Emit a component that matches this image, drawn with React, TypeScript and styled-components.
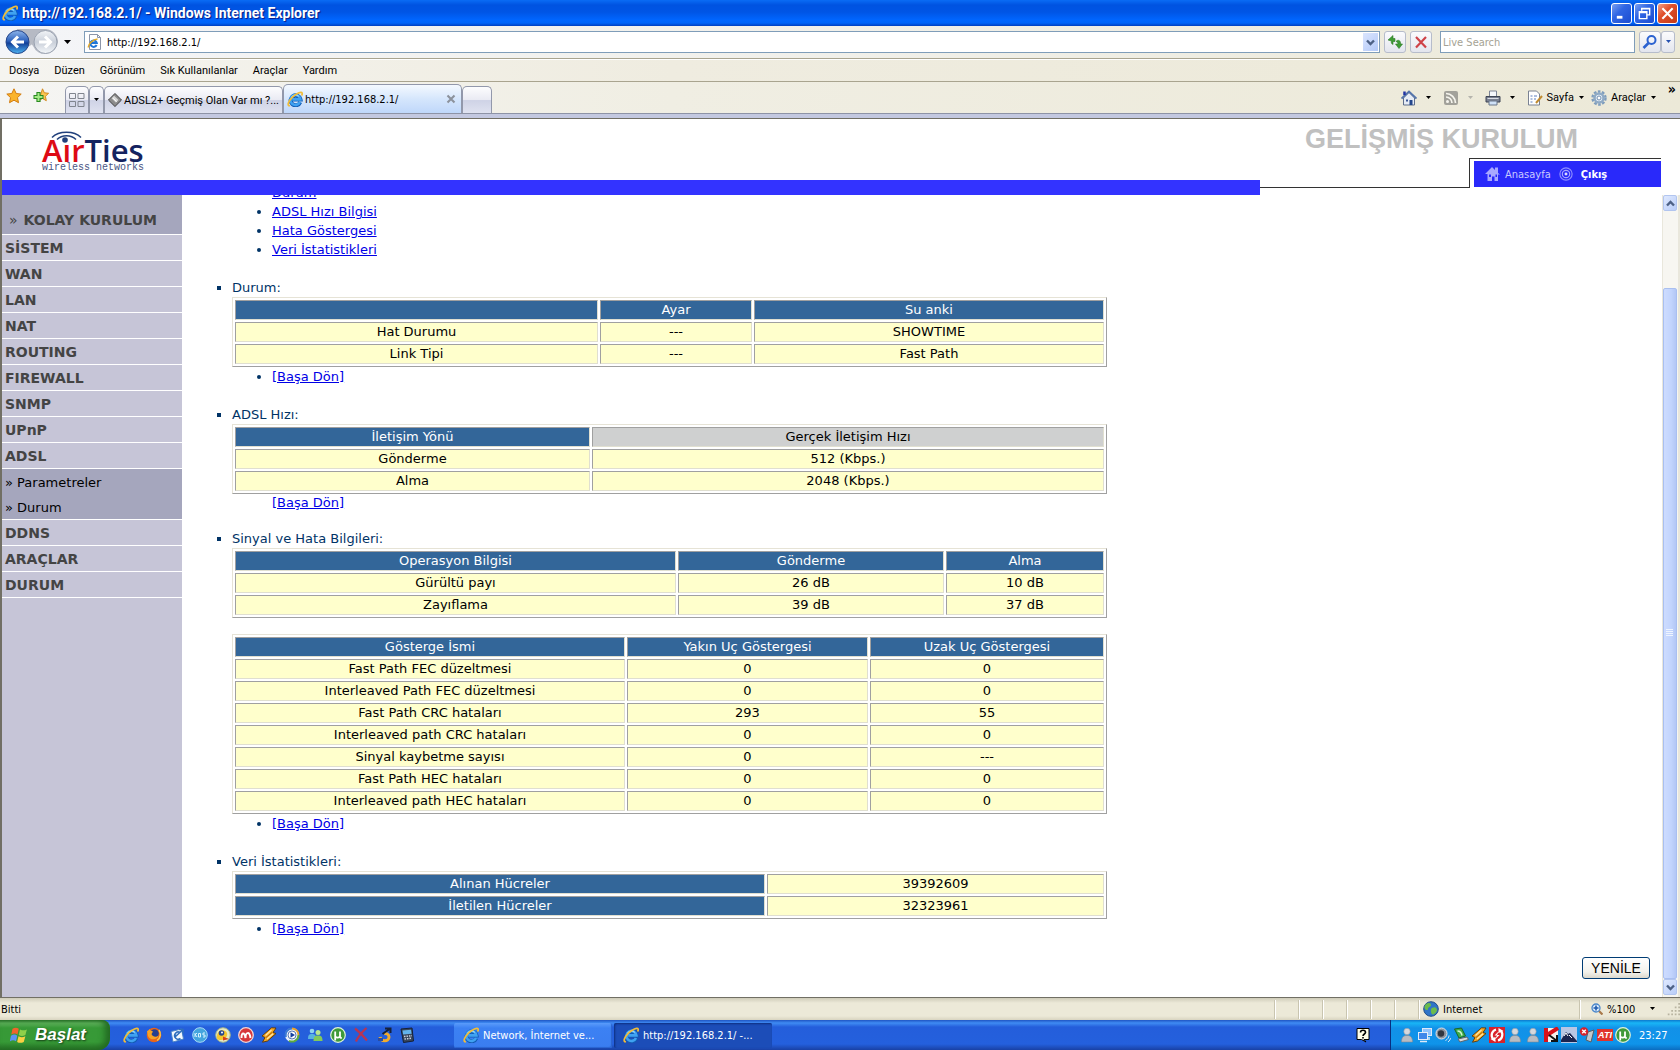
import React from 'react';
import styled, { createGlobalStyle, css } from 'styled-components';

const ui = '"DejaVu Sans Condensed", "Noto Sans", sans-serif';
const narrow = 'Roboto, "Noto Sans", sans-serif';
const body = '"DejaVu Sans", sans-serif';

const GlobalStyle = createGlobalStyle`
  * { box-sizing: border-box; }
  body { margin: 0; font-family: ${ui}; font-size: 11px; color: #000; }
  button, input { font: inherit; color: inherit; margin: 0; }
  button { background: none; border: 0; padding: 0; }
`;

const Window = styled.div`
  display: flex;
  flex-direction: column;
  height: 100vh;
  min-height: 600px;
  background: #fff;
  overflow: hidden;
`;

/* ---------- title bar ---------- */

const TitleBar = styled.header`
  display: flex;
  align-items: center;
  flex: none;
  height: 26px;
  padding: 0 2px;
  gap: 4px;
  background: linear-gradient(#0a6cf5 0, #0053e1 5px, #0055e5 12px, #0066ff 20px, #0064f8 23px, #003fc0 26px);
`;

const Title = styled.h1`
  flex: 1;
  margin: 0;
  font: bold 14px ${narrow};
  color: #fff;
  text-shadow: 1px 1px 1px #0a1883;
`;

const Captions = styled.div`
  display: flex;
  gap: 2px;
`;

const Caption = styled.button<{ $close?: boolean }>`
  display: grid;
  place-items: center;
  width: 21px;
  height: 21px;
  border: 1px solid #fff;
  border-radius: 3px;
  background: ${p => p.$close
    ? 'linear-gradient(135deg, #f0a088, #e0502c 40%, #c53a14)'
    : 'linear-gradient(135deg, #7a9ff0, #3066e4 40%, #1c4cd0)'};
`;

/* ---------- navigation ---------- */

const NavBar = styled.form`
  display: flex;
  align-items: center;
  flex: none;
  height: 33px;
  padding: 0 5px;
  background: linear-gradient(90deg, #f4f5f8, #f1f0ea 50%, #ece9d8);
  border-bottom: 1px solid #a9a48f;
`;

const NavButtons = styled.div`
  display: flex;
  align-items: center;
  width: 79px;
  gap: 5px;
`;

const AddressBox = styled.div`
  display: flex;
  align-items: center;
  flex: 1;
  height: 22px;
  padding: 0 1px 0 2px;
  gap: 4px;
  background: #fff;
  border: 1px solid #7f9db9;
`;

const TextField = styled.input`
  flex: 1;
  min-width: 0;
  padding: 0;
  border: 0;
  outline: 0;
  background: transparent;
  &::placeholder { color: #a5a294; opacity: 1; }
`;

const DropButton = styled.button`
  display: grid;
  place-items: center;
  width: 15px;
  height: 18px;
  background: linear-gradient(135deg, #dbe5fe, #b3c9f8);
`;

const SquareButton = styled.button<{ $narrow?: boolean }>`
  display: grid;
  place-items: center;
  width: ${p => (p.$narrow ? 14 : 22)}px;
  height: 22px;
  border: 1px solid #b6bccb;
  border-radius: 3px;
  background: linear-gradient(#fbfbfd, #e3e5ee);
`;

const NavActions = styled.div`
  display: flex;
  gap: 4px;
  margin: 0 8px 0 4px;
`;

const SearchBox = styled(AddressBox)`
  flex: none;
  width: 195px;
  margin-right: 4px;
`;

/* ---------- menu ---------- */

const MenuBar = styled.nav`
  display: flex;
  align-items: center;
  flex: none;
  height: 23px;
  padding: 0 9px;
  gap: 15px;
  font-family: ${narrow};
  background: linear-gradient(90deg, #f5f4f0, #efece0 40%, #ece9d8);
  border-top: 1px solid #fff;
  border-bottom: 1px solid #a9a48f;
`;

/* ---------- tab row ---------- */

const TabRow = styled.div`
  display: flex;
  flex: none;
  height: 32px;
  font-family: ${narrow};
  background: linear-gradient(90deg, #f5f5f3, #f0eee3 40%, #ece9d8);
  border-bottom: 1px solid #8d93a6;
`;

const Favorites = styled.div`
  display: flex;
  align-items: center;
  width: 65px;
  padding-left: 6px;
  gap: 11px;
`;

const Tabs = styled.div`
  display: flex;
  align-items: flex-end;
  flex: 1;
`;

const Tab = styled.button<{ $active?: boolean; $width: number }>`
  display: flex;
  align-items: center;
  justify-content: ${p => (p.$width < 50 ? 'center' : 'flex-start')};
  width: ${p => p.$width}px;
  height: ${p => (p.$active ? 29 : 27)}px;
  padding: 0 ${p => (p.$width < 50 ? 0 : 3)}px;
  gap: 2px;
  white-space: nowrap;
  font-family: ${p => (p.$active ? ui : 'inherit')};
  border: 1px solid #9298ab;
  border-bottom: 0;
  border-radius: 5px 5px 0 0;
  background: ${p => (p.$active
    ? 'linear-gradient(#f4f9ff, #d5e6fc 50%, #bfd7fa)'
    : 'linear-gradient(#fdfdfe, #e9eaf3 50%, #cfd3e6 52%, #dfe2f0)')};
`;

const TabText = styled.span`
  flex: 1;
  text-align: left;
`;

const Commands = styled.div`
  display: flex;
  align-items: center;
  gap: 6px;
  padding-right: 4px;
`;

const Command = styled.button<{ $faded?: boolean; $iconOnly?: boolean }>`
  display: flex;
  align-items: center;
  gap: ${p => (p.$iconOnly ? 8 : 4)}px;
  margin-right: ${p => (p.$iconOnly ? 5 : 0)}px;
  opacity: ${p => (p.$faded ? 0.55 : 1)};
`;

const More = styled.button`
  align-self: flex-start;
  margin-left: 5px;
  font: bold 14px/14px ${ui};
`;

/* ---------- router page ---------- */

const Frame = styled.div`
  display: flex;
  flex-direction: column;
  flex: 1;
  min-height: 0;
  border-top: 4px solid #c3c8e0;
`;

const Page = styled.div`
  display: flex;
  flex-direction: column;
  flex: 1;
  min-height: 0;
  border: solid #716f64;
  border-width: 1px 0 1px 2px;
`;

const Banner = styled.header`
  display: flex;
  flex: none;
  height: 76px;
  padding-right: 19px;
`;

const Brand = styled.div`
  flex: 1;
  padding-left: 38px;
  border-bottom: 15px solid #3333ff;
`;

const BannerRight = styled.div`
  display: grid;
  grid-template-rows: 39px 30px;
  width: 401px;
`;

const BannerTitle = styled.h2`
  margin: 0;
  padding: 4px 83px 0 0;
  text-align: right;
  white-space: nowrap;
  font: bold 27px/32px "Liberation Sans", sans-serif;
  color: #c0c0c0;
`;

const BannerNav = styled.div`
  display: flex;
  &::before {
    content: '';
    flex: 1;
    border-bottom: 1px solid #333;
  }
`;

const LinkFrame = styled.div`
  width: 192px;
  padding: 2px 0 0 4px;
  border: solid #333;
  border-width: 1px 0 0 1px;
`;

const LinkBar = styled.nav`
  display: flex;
  align-items: center;
  height: 26px;
  padding-left: 11px;
  gap: 4px;
  background: #2929fa;
  a { color: #c9c9ff; text-decoration: none; margin-right: 4px; }
  a:last-child { margin-left: 4px; color: #fff; font-weight: bold; }
`;

const Body = styled.div`
  display: flex;
  flex: 1;
  min-height: 0;
`;

const Sidebar = styled.nav`
  flex: none;
  width: 180px;
  background: #c6c5d7;
`;

const sideItem = css`
  display: flex;
  align-items: center;
  text-decoration: none;
  font-family: ${body};
`;

const SideHead = styled.a`
  ${sideItem}
  height: 40px;
  padding: 10px 0 0 7px;
  gap: 6px;
  font-weight: bold;
  font-size: 14px;
  color: #444;
  background: #a5a6bd;
  border-bottom: 1px solid #fff;
  span { font-weight: normal; }
`;

const SideLink = styled.a`
  ${sideItem}
  height: 26px;
  padding-left: 3px;
  font-weight: bold;
  font-size: 14px;
  color: #444;
  border-bottom: 1px solid #fff;
`;

const SubMenu = styled.div`
  background: #a5a6bd;
  border-bottom: 1px solid #fff;
`;

const SubLink = styled.a`
  ${sideItem}
  height: 25px;
  padding: 2px 0 0 3px;
  font-size: 13px;
  color: #000;
`;

const Main = styled.main`
  display: flex;
  flex-direction: column;
  justify-content: flex-end;
  flex: 1;
  min-width: 0;
  padding: 0 12px 18px 32px;
  overflow: hidden;
  font: 13px/19px ${body};
  color: #003366;
`;

const Sections = styled.ul`
  flex: none;
  margin: 0 0 19px;
  padding: 0 0 0 18px;
  list-style: square;
`;

const Index = styled.ul`
  flex: none;
  margin: 0 0 19px;
  padding: 0 0 0 58px;
`;

const Section = styled.li<{ $tight?: boolean }>`
  margin-bottom: ${p => (p.$tight ? 18 : 19)}px;
  &:last-child { margin-bottom: 0; }
`;

const Back = styled.ul<{ $plain?: boolean }>`
  margin: 0;
  padding: 0 0 0 40px;
  list-style: ${p => (p.$plain ? 'none' : 'disc')};
  line-height: ${p => (p.$plain ? 17 : 19)}px;
`;

const Anchor = styled.a`
  color: #0000e6;
  text-decoration: underline;
`;

const Table = styled.table`
  width: 100%;
  max-width: 875px;
  table-layout: fixed;
  border: 1px solid;
  border-color: #e6e3d6 #a0a0a0 #a0a0a0 #e6e3d6;
  border-collapse: separate;
  border-spacing: 2px;
  text-align: center;
  & + & { margin-top: 16px; }
`;

const Col = styled.col<{ $width?: number }>`
  ${p => p.$width && css`width: ${p.$width}px;`}
`;

const cell = css`
  height: 20px;
  padding: 0;
  font-weight: normal;
  line-height: 18px;
  border: 1px solid;
  border-color: #a0a0a0 #e0dfd0 #e0dfd0 #a0a0a0;
`;

const Head = styled.th<{ $gray?: boolean }>`
  ${cell}
  color: ${p => (p.$gray ? '#000' : '#fff')};
  background: ${p => (p.$gray ? '#cfd0d0' : '#336699')};
`;

const Cell = styled.td`
  ${cell}
  color: #000;
  background: #ffffcc;
`;

const Refresh = styled.button`
  align-self: flex-end;
  flex: none;
  width: 68px;
  height: 22px;
  font: 14px/18px "Liberation Sans", sans-serif;
  color: #000;
  border: 1px solid #003c74;
  border-radius: 3px;
  background: linear-gradient(#fff, #f3f2ec 70%, #dcd8cc);
`;

const ScrollBar = styled.div`
  display: flex;
  flex-direction: column;
  flex: none;
  width: 18px;
  padding: 0 1px 2px 0;
  border: solid #e9e7dc;
  border-width: 0 2px 0 1px;
  background: #f7f6f1;
`;

const ScrollButton = styled.button`
  display: grid;
  place-items: center;
  flex: none;
  height: 16px;
  border: 1px solid #b2c5ef;
  border-radius: 2px;
  background: linear-gradient(135deg, #dfe9ff, #b9cdf8);
`;

const Track = styled.div`
  display: flex;
  flex-direction: column;
  flex: 1;
`;

const Thumb = styled.div`
  display: grid;
  place-items: center;
  flex: 9;
  border: 1px solid #a9bff0;
  border-radius: 2px;
  background: linear-gradient(90deg, #cddcff, #c2d4fd 60%, #b3c7f5);
`;

const TrackGap = styled.div`
  flex: 1;
`;

/* ---------- status bar ---------- */

const StatusBar = styled.footer`
  display: flex;
  align-items: center;
  flex: none;
  height: 22px;
  padding-left: 1px;
  background: linear-gradient(#cfccb9, #ece9d8 5px, #ece9d8 18px, #d8d4c0);
`;

const StatusText = styled.span`
  flex: 1;
`;

const Pane = styled.div<{ $width: number; $inset?: boolean }>`
  display: flex;
  align-items: center;
  width: ${p => p.$width}px;
  height: 19px;
  padding-left: ${p => (p.$inset ? 11 : 4)}px;
  gap: 4px;
  border-left: 1px solid #c9c5b0;
  box-shadow: inset 1px 0 #fff;
`;

const ZoomLevel = styled.button`
  display: flex;
  align-items: center;
  flex: 1;
  gap: 14px;
`;

/* ---------- taskbar ---------- */

const TaskBar = styled.footer`
  display: flex;
  align-items: stretch;
  flex: none;
  height: 30px;
  color: #fff;
  background: linear-gradient(#1f55c4 0, #3f8cf3 3px, #245edb 7px, #2460dd 24px, #1941a5 30px);
`;

const Start = styled.button`
  display: flex;
  align-items: center;
  width: 110px;
  padding-left: 10px;
  gap: 5px;
  font: italic bold 17px "Liberation Sans", sans-serif;
  color: #fff;
  text-shadow: 1px 1px 2px #143c14;
  border-radius: 0 8px 12px 0;
  background: linear-gradient(#2f7a2f 0, #5fb35c 3px, #379937 8px, #379a37 22px, #246f24 30px);
  box-shadow: inset -5px 0 6px #236b23;
`;

const QuickLaunch = styled.div`
  display: flex;
  align-items: center;
  width: 344px;
  padding-left: 13px;
  gap: 7px;
`;

const Tasks = styled.div`
  display: flex;
  align-items: center;
  flex: 1;
  gap: 2px;
`;

const Task = styled.button<{ $active?: boolean }>`
  display: flex;
  align-items: center;
  width: 158px;
  height: 25px;
  padding-left: 9px;
  gap: 4px;
  border-radius: 2px;
  background: ${p => (p.$active ? '#1c4db8' : 'linear-gradient(#5a9cfb, #3c81f3 5px, #3a7df0)')};
  box-shadow: ${p => (p.$active ? 'inset 1px 1px 2px #0e2f80' : 'inset -1px -1px 1px #2a63cf')};
`;

const Help = styled.div`
  display: grid;
  place-items: center;
  width: 54px;
`;

const Tray = styled.div`
  display: flex;
  align-items: center;
  width: 290px;
  padding-left: 8px;
  gap: 2px;
  border-left: 1px solid #092e80;
  background: linear-gradient(#0c79cf 0, #19b6f6 3px, #1291e8 8px, #0f94ea 24px, #0b6dc0 30px);
  time { margin-left: 6px; }
`;

/* ---------- icons ---------- */

type IconProps = { size?: number; box?: number; children: React.ReactNode };
const Icon = ({ size = 16, box = 16, children }: IconProps) => (
  <svg width={size} height={size} viewBox={`0 0 ${box} ${box}`} fill="none" aria-hidden="true">{children}</svg>
);

const IE = () => (
  <Icon>
    <path d="M13.200 11.200A5 5 0 1 1 13.500 8.400H5.200" stroke="#135cb4" strokeWidth="4" />
    <path d="M13 11A5 5 0 1 1 13.400 8.400H5.200" stroke="#3fa2f2" strokeWidth="2.600" />
    <path d="M4.400 6.600A4.600 4.600 0 0 1 11.800 5.400" stroke="#a5defe" strokeWidth="1.200" />
    <path d="M3 14.700C-.2 15.200 1 10.600 5.200 6.400 9.400 2.200 14.500.200 15.200 2.200c.2.700-.2 1.600-.7 2.300" stroke="#f2bd38" strokeWidth="1.700" />
  </Icon>
);

const Down = ({ color = '#000', large }: { color?: string; large?: boolean }) => (
  <svg width="7" height="4" viewBox="0 0 7 4" aria-hidden="true">
    <path d={large ? 'M0 0h7L3.500 4z' : 'M1 0h5L3.500 3z'} fill={color} />
  </svg>
);

const Chevron = ({ up }: { up?: boolean }) => (
  <svg width="9" height="7" viewBox="0 0 9 7" fill="none" aria-hidden="true">
    <path d={up ? 'M1 5.500 4.500 2 8 5.500' : 'M1 1.500 4.500 5 8 1.500'} stroke="#4d6185" strokeWidth="2.400" />
  </svg>
);

const BackForward = () => (
  <svg width="54" height="28" viewBox="0 0 54 28" fill="none" aria-hidden="true">
    <defs>
      <linearGradient id="back" x1="0" y1="0" x2="0" y2="1">
        <stop offset="0" stopColor="#8db4ea" /><stop offset=".45" stopColor="#2f63bd" />
        <stop offset=".55" stopColor="#123f99" /><stop offset="1" stopColor="#4fb4f2" />
      </linearGradient>
      <linearGradient id="forward" x1="0" y1="0" x2="0" y2="1">
        <stop offset="0" stopColor="#f2f4f7" /><stop offset=".5" stopColor="#c9cfd9" /><stop offset="1" stopColor="#f4f7fa" />
      </linearGradient>
    </defs>
    <path d="M12 1h29a13 13 0 0 1 12 13 13 13 0 0 1-25 4c-1-2-2-2-3 0A13 13 0 0 1 12 1z" fill="#b6bac4" />
    <circle cx="12.500" cy="14" r="11.500" fill="url(#back)" stroke="#27468a" />
    <circle cx="40.500" cy="14" r="11.500" fill="url(#forward)" stroke="#9aa2b0" />
    <path d="M19 14H8m5-5.500L7.500 14l5.500 5.500" stroke="#fff" strokeWidth="3" />
    <path d="M34 14h11m-5-5.500 5.500 5.500-5.500 5.500" stroke="#fff" strokeWidth="3" />
  </svg>
);

const PageIcon = () => (
  <Icon>
    <path d="M2.500.5h8l3 3v12h-11z" fill="#fff" stroke="#8c95a8" />
    <path d="M10.500.5v3h3" stroke="#8c95a8" />
    <path d="M9.600 11A3.200 3.200 0 1 1 9.800 9H4" stroke="#1f76d8" strokeWidth="2" />
    <path d="M1.500 13.500C.5 11 6 5 10.500 5" stroke="#e6aa22" strokeWidth="1.400" />
  </Icon>
);

const star = 'M8 .8l2.200 4.700 5 .6-3.700 3.500 1 5.100L8 12.200l-4.500 2.500 1-5.100L.8 6.100l5-.6z';

const User = () => (
  <Icon>
    <circle cx="8" cy="4.500" r="3.200" fill="#d5d8dc" stroke="#8f98a5" strokeWidth=".6" />
    <path d="M2.500 15c0-5 2-6.500 5.500-6.500S13.500 10 13.500 15z" fill="#b8bcc2" stroke="#7f8894" strokeWidth=".6" />
  </Icon>
);

const Winamp = () => (
  <Icon>
    <path d="M10.500.8 1 9l3 1.500-2.500 4.700 5-1.200L15 6.500l-3-1L15 1z" fill="#f7a823" stroke="#5b3605" strokeWidth=".9" />
    <path d="M10.500 3 4.500 8.500m1.500 3.500 6-5.200" stroke="#ffe6a8" strokeWidth="1.200" />
    <path d="M11 5.500 5 10.500" stroke="#a8640c" />
  </Icon>
);

const Torrent = () => (
  <Icon>
    <circle cx="8" cy="8" r="7.300" fill="#3f9a3a" stroke="#dff3da" strokeWidth="1.200" />
    <path d="M5.200 13.500V4.500v4.200c0 2.500 4.800 2.500 4.800 0V4.500v5c0 1.200.8 1.500 1.800 1.200" stroke="#fff" strokeWidth="1.800" />
  </Icon>
);

const Firefox = () => (
  <Icon>
    <circle cx="8" cy="8" r="7.300" fill="#e8641b" />
    <circle cx="8.500" cy="6.500" r="4.300" fill="#27408f" />
    <path d="M1 4c1 0 2-1 2.500-2 .5 1.500 2 2 3.500 2.500L5.500 7c1 3 5 3.500 7 1.500C12 13 4 14 2 9z" fill="#f7a325" />
    <path d="M13 3c2 3 2 8-2 10.500" stroke="#fbc94a" strokeWidth="1.400" />
  </Icon>
);

const Outlook = () => (
  <Icon>
    <path d="M2 4.500 12.500 2l2 10L4 15z" fill="#f4f9fe" stroke="#4a84c8" />
    <path d="M11 5.500A3.600 3.600 0 1 0 11.500 11.500M6.500 9.500 13.500 3M10 2.500h4v4" stroke="#2f6fbe" strokeWidth="1.600" />
  </Icon>
);

const Disc = () => (
  <Icon>
    <circle cx="8" cy="8" r="7.300" fill="#45a5de" stroke="#a9dbf6" />
    <path d="M3 6v4m0-2 2-2M3.500 8 5 10m1.500-3.500h2v3.500h-2zm6.500-.5h-2v2h2v2h-2" stroke="#d8f2ff" />
  </Icon>
);

const Duck = () => (
  <Icon>
    <circle cx="8" cy="8" r="7.300" fill="#e6e9c4" stroke="#9fb08a" />
    <path d="M2 9c0-6 8-8 10-3 1 3-2 7-6 7s-4-1-4-4z" fill="#f6c62d" />
    <circle cx="6.500" cy="6" r="2.800" fill="#26468e" /><circle cx="7" cy="5.500" r="1" fill="#fff" />
    <path d="M8 9.500 14 12l-6 1.500z" fill="#d8401c" />
  </Icon>
);

const Nero = () => (
  <Icon>
    <circle cx="8" cy="8" r="7.300" fill="#d7373b" stroke="#f3d5d5" strokeWidth="1.300" />
    <path d="M3.500 11c0-6 3-6 4 0 0-6 4-7 5 0" stroke="#fff" strokeWidth="2" />
  </Icon>
);

const Media = () => (
  <Icon>
    <circle cx="8" cy="8" r="7" fill="#e9eef8" />
    <path d="M2 10A6.500 6.500 0 0 1 8 1.500" stroke="#3a78d4" strokeWidth="2" />
    <path d="M8 1.500A6.500 6.500 0 0 1 14.500 8" stroke="#e7a22d" strokeWidth="2" />
    <path d="M14.500 8A6.500 6.500 0 0 1 5 13.800" stroke="#5fab3d" strokeWidth="2" />
    <circle cx="8" cy="8" r="4" fill="#fff" stroke="#5a78b5" /><path d="M6.500 5.200 11 8l-4.500 2.800z" fill="#153fa0" />
  </Icon>
);

const Messenger = () => (
  <Icon>
    <circle cx="5" cy="4" r="2.300" fill="#8fd3ef" /><path d="M1 12c0-4 1-5 4-5s4 1 4 5z" fill="#58b4de" />
    <circle cx="11" cy="5.500" r="2.500" fill="#b9e68c" /><path d="M6.500 14c0-4.500 1.500-5.500 4.500-5.500s4.500 1 4.500 5.500z" fill="#82c95a" />
  </Icon>
);

const RedX = () => (
  <Icon><path d="M2 1.500c4 3 8 7 12 12M13.500 1C9 5 5 9.500 3 14.500" stroke="#b93452" strokeWidth="2.200" /></Icon>
);

const Swirl = () => (
  <Icon>
    <path d="M4 10c1 5 9 5 9 0 0-3-3-4-5-3" stroke="#f1ab2d" strokeWidth="3" />
    <path d="m6.500 7 7-5M9 1.500h5.500V6" stroke="#16223b" strokeWidth="2" />
    <path d="M2 12.500h5" stroke="#2b4da0" strokeWidth="3" />
  </Icon>
);

const Calculator = () => (
  <Icon>
    <path d="m2 2 11-1 1.500 13-10 1.500z" fill="#39465c" stroke="#152035" />
    <path d="m3.500 3.500 8.500-.8.6 4-8.500.8z" fill="#63b3ec" />
    <path d="m5 9.500 8-.8M5.500 12l7.500-.8" stroke="#cfd6e0" strokeWidth="1.400" strokeDasharray="1.500 1" />
  </Icon>
);

const Monitors = () => (
  <Icon>
    <rect x="5.500" y="1.500" width="9" height="7" fill="#8fc4ff" stroke="#dce9f8" />
    <rect x="1.500" y="5.500" width="9" height="7" fill="#3f88ea" stroke="#e3edf8" />
    <path d="M3 14.500h7M12 10v3" stroke="#dce9f8" strokeWidth="1.500" />
  </Icon>
);

const Speaker = () => (
  <Icon>
    <circle cx="6.500" cy="6.500" r="5.500" fill="#8d949d" stroke="#e0e4e8" /><circle cx="6" cy="6.500" r="3.200" fill="#30363f" />
    <path d="M10.500 13.500c2-1 3.500-3 3.500-5M13 15c1.500-1 2.500-3 2.500-4" stroke="#dbe7f5" />
  </Icon>
);

const Safe = () => (
  <Icon>
    <path d="m1.500 2 7-1 4 8-6.500 2z" fill="#3fae49" stroke="#1b6427" /><path d="m5 12 9-2 1.500 2.500L7 15z" fill="#d7dadd" stroke="#5d646b" />
    <path d="M4.500 4c3 0 4 2 4.500 4.500" stroke="#d4f6d2" strokeWidth="1.500" />
  </Icon>
);

const Sync = () => (
  <Icon>
    <rect width="16" height="16" fill="#d9222a" />
    <path d="M7 2.500A6 6 0 0 0 4 12M9 13.500A6 6 0 0 0 12 4" stroke="#fff" strokeWidth="2.200" />
    <path d="m1.500 12 5-2v5zM14.500 4l-5 2V1zM10 4 5.500 8.500H8L6 12.500 10.500 8H8z" fill="#fff" />
  </Icon>
);

const TrayText = styled.span`
  display: grid;
  place-items: center;
  width: 16px;
  height: 12px;
  font: italic bold 9px "Liberation Sans", sans-serif;
  background: #e0332b;
`;

const Logo = () => (
  <svg width="112" height="60" viewBox="0 0 112 60" role="img" aria-label="AirTies wireless networks">
    <path d="M12 18.500C19 11.500 34 11.500 41 18.500" fill="none" stroke="#21407c" strokeWidth="1.500" />
    <path d="M17 20.500C22 15.500 31 15.500 36 20.500" fill="none" stroke="#21407c" strokeWidth="1.500" />
    <text x="2" y="43" fontFamily="Open Sans" fontWeight="600" fontSize="31">
      <tspan fill="#dd0a14">Aır</tspan><tspan fill="#14235f">Ties</tspan>
    </text>
    <circle cx="25" cy="21" r="2.800" fill="#21407c" />
    <text x="2" y="51" fontFamily="Liberation Mono" fontSize="10" fill="#4a5684">wireless networks</text>
  </svg>
);

/* ---------- data ---------- */

type Grid = { cols: number[]; head: string[]; rows: string[][]; gray?: number };

const lineState: Grid = {
  cols: [363, 152],
  head: ['', 'Ayar', 'Su anki'],
  rows: [['Hat Durumu', '---', 'SHOWTIME'], ['Link Tipi', '---', 'Fast Path']],
};
const speed: Grid = {
  cols: [355],
  head: ['İletişim Yönü', 'Gerçek İletişim Hızı'],
  gray: 1,
  rows: [['Gönderme', '512 (Kbps.)'], ['Alma', '2048 (Kbps.)']],
};
const signal: Grid = {
  cols: [441, 266],
  head: ['Operasyon Bilgisi', 'Gönderme', 'Alma'],
  rows: [['Gürültü payı', '26 dB', '10 dB'], ['Zayıflama', '39 dB', '37 dB']],
};
const errors: Grid = {
  cols: [390, 241],
  head: ['Gösterge İsmi', 'Yakın Uç Göstergesi', 'Uzak Uç Göstergesi'],
  rows: [
    ['Fast Path FEC düzeltmesi', '0', '0'],
    ['Interleaved Path FEC düzeltmesi', '0', '0'],
    ['Fast Path CRC hataları', '293', '55'],
    ['Interleaved path CRC hataları', '0', '0'],
    ['Sinyal kaybetme sayısı', '0', '---'],
    ['Fast Path HEC hataları', '0', '0'],
    ['Interleaved path HEC hataları', '0', '0'],
  ],
};

const menus = ['Dosya', 'Düzen', 'Görünüm', 'Sık Kullanılanlar', 'Araçlar', 'Yardım'];
const sideTop = ['SİSTEM', 'WAN', 'LAN', 'NAT', 'ROUTING', 'FIREWALL', 'SNMP', 'UPnP', 'ADSL'];
const sideBottom = ['DDNS', 'ARAÇLAR', 'DURUM'];

const DataTable = ({ grid }: { grid: Grid }) => (
  <Table>
    <colgroup>
      {grid.cols.map((w, i) => <Col key={i} $width={w} />)}
      <Col />
    </colgroup>
    <thead>
      <tr>{grid.head.map((h, i) => <Head key={i} scope="col" $gray={grid.gray === i}>{h}</Head>)}</tr>
    </thead>
    <tbody>
      {grid.rows.map(r => <tr key={r[0]}>{r.map((c, i) => <Cell key={i}>{c}</Cell>)}</tr>)}
    </tbody>
  </Table>
);

const BackToTop = ({ plain }: { plain?: boolean }) => (
  <Back $plain={plain}><li><Anchor href="#top">[Başa Dön]</Anchor></li></Back>
);

export default function App() {
  return (
    <Window>
      <GlobalStyle />
      <TitleBar>
        <IE />
        <Title>http://192.168.2.1/ - Windows Internet Explorer</Title>
        <Captions>
          <Caption aria-label="Minimize"><Icon size={15}><path d="M3 12h6" stroke="#fff" strokeWidth="3" /></Icon></Caption>
          <Caption aria-label="Restore">
            <Icon size={15}><path d="M5 5V2.500h8.500v7H11M2.500 6h8v7.500h-8zM2.500 7h8M5 3h8.500" stroke="#fff" strokeWidth="1.500" /></Icon>
          </Caption>
          <Caption $close aria-label="Close"><Icon size={15}><path d="m2.500 2.500 11 11m0-11-11 11" stroke="#fff" strokeWidth="2.200" /></Icon></Caption>
        </Captions>
      </TitleBar>

      <NavBar onSubmit={e => e.preventDefault()}>
        <NavButtons><BackForward /><Down large /></NavButtons>
        <AddressBox>
          <PageIcon />
          <TextField aria-label="Address" defaultValue="http://192.168.2.1/" />
          <DropButton type="button" aria-label="History"><Chevron /></DropButton>
        </AddressBox>
        <NavActions>
          <SquareButton type="button" aria-label="Refresh">
            <Icon>
              <path d="M1 6 6 1.500v3h2v3H6v3C3.500 9.500 4.500 7 4.500 7z" fill="#3f9c35" stroke="#2c7a26" strokeWidth=".6" />
              <path d="M15.500 10 12 14.500 8.500 10H11c0-1.500-.5-2-2-2.500 2-2.500 5-1 4.500 2.500z" fill="#3f9c35" stroke="#2c7a26" strokeWidth=".6" />
            </Icon>
          </SquareButton>
          <SquareButton type="button" aria-label="Stop">
            <Icon><path d="m3 3 10 10.500M13 3 3 13.500" stroke="#cf4248" strokeWidth="2.200" /></Icon>
          </SquareButton>
        </NavActions>
        <SearchBox><TextField aria-label="Live Search" placeholder="Live Search" /></SearchBox>
        <SquareButton aria-label="Search">
          <Icon><circle cx="9.500" cy="6" r="4" stroke="#2c62d0" strokeWidth="2" /><path d="m6.500 9-5 5" stroke="#2c62d0" strokeWidth="2.600" /></Icon>
        </SquareButton>
        <SquareButton type="button" $narrow aria-label="Search options"><Down color="#2450b0" /></SquareButton>
      </NavBar>

      <MenuBar>{menus.map(m => <button key={m} type="button">{m}</button>)}</MenuBar>

      <TabRow>
        <Favorites>
          <button aria-label="Favorites"><Icon><path d={star} fill="#fbb42c" stroke="#d27c10" /></Icon></button>
          <button aria-label="Add to favorites">
            <Icon>
              <path d="M9.500.8l1.800 4 4.300.5-3.200 3 .9 4.400-3.800-2.200-3.800 2.200z" fill="#fbc652" stroke="#d28a20" />
              <path d="M5.500 4v10M.5 9h10" stroke="#2a8a20" strokeWidth="4.200" /><path d="M5.500 5v8M1.500 9h8" stroke="#a4ea85" strokeWidth="2" />
            </Icon>
          </button>
        </Favorites>
        <Tabs>
          <Tab $width={24} aria-label="Quick tabs">
            <Icon><path d="M.5 1.500h6v5h-6zM9 1.500h6v5H9zM.5 9.500h6v5h-6zM9 9.500h6v5H9z" stroke="#80858f" /></Icon>
          </Tab>
          <Tab $width={15} aria-label="Tab list"><Down /></Tab>
          <Tab $width={179}>
            <Icon><path d="m8 .5 7.500 7.500L8 15.500.5 8z" fill="#8b8b8b" stroke="#333" /><path d="m7 3 5 5-3 3-5-5z" fill="#d6d6d6" /><path d="m6 6 4 4" stroke="#fff" /></Icon>
            <TabText>ADSL2+ Geçmiş Olan Var mı ?...</TabText>
          </Tab>
          <Tab $width={179} $active>
            <IE /><TabText>http://192.168.2.1/</TabText>
            <Icon size={14}><path d="m4 4 8 8m0-8-8 8" stroke="#8c929c" strokeWidth="2.400" /></Icon>
          </Tab>
          <Tab $width={30} aria-label="New tab" />
        </Tabs>
        <Commands>
          <Command $iconOnly aria-label="Home">
            <Icon><path d="M2.500 8v7h11V8L8 2.500z" fill="#e6ecf5" stroke="#5f6f8c" /><path d="M.5 8.500 8 1.500l7.500 7" stroke="#5474ab" strokeWidth="1.800" /><path d="M3.500 5V1.500" stroke="#2234a4" strokeWidth="2.500" /><path d="M8.500 10h3v5h-3z" fill="#24478c" /><path d="M5 9.500h2v2H5z" fill="#3b5795" /></Icon>
            <Down />
          </Command>
          <Command $iconOnly $faded aria-label="Feeds">
            <Icon><rect x="1" y="1" width="14" height="14" rx="2" fill="#666" /><circle cx="4.500" cy="11.500" r="1.500" fill="#fff" /><path d="M3 7a6 6 0 0 1 6 6M3 3.500A9.500 9.500 0 0 1 12.500 13" stroke="#fff" strokeWidth="1.700" /></Icon>
            <Down color="#888" />
          </Command>
          <Command $iconOnly aria-label="Print">
            <Icon><path d="M4.500 1h7v6h-7z" fill="#f4f7fb" stroke="#7c8496" /><path d="M1 6.500h14V12H1z" fill="#7a8192" stroke="#3e4554" /><path d="M4 11h8v4H4z" fill="#cfe1f7" stroke="#6b7689" /><path d="M2.500 8.500h11" stroke="#d9dde4" /></Icon>
            <Down />
          </Command>
          <Command>
            <Icon><path d="M1.500 1h8l3 3v11h-11z" fill="#fff" stroke="#7a8292" /><path d="M3.500 6h2m1.500 0h3m-6.500 3h2m1.500 0h2m-5.500 3h2" stroke="#5b7fc0" /><path d="M15 6 9 13" stroke="#c08b30" strokeWidth="2" /></Icon>
            Sayfa<Down />
          </Command>
          <Command>
            <Icon><circle cx="8" cy="8" r="6.500" stroke="#7e9dbd" strokeWidth="2.400" strokeDasharray="2.600 1.500" /><circle cx="8" cy="8" r="4.500" fill="#e7f0f8" stroke="#8faac5" strokeWidth="2.500" /><circle cx="8" cy="8" r="2" fill="#fff" stroke="#6f8cae" /></Icon>
            Araçlar<Down />
          </Command>
          <More aria-label="More commands">»</More>
        </Commands>
      </TabRow>

      <Frame>
        <Page>
          <Banner>
            <Brand><Logo /></Brand>
            <BannerRight>
              <BannerTitle>GELİŞMİŞ KURULUM</BannerTitle>
              <BannerNav>
                <LinkFrame>
                  <LinkBar>
                    <Icon><path d="M0 8 7 1l3 3V1.500h3V7l2 1.500h-2V15H9.500v-4.500H7V15H2.500V8z" fill="#a8a8ff" /><path d="M4 8.500h2V11H4zM10.500 8.500h1.500V11h-1.500z" fill="#2929fa" /></Icon>
                    <a href="#home">Anasayfa</a>
                    <Icon size={14}><circle cx="8" cy="8" r="7" stroke="#8f8fff" strokeWidth="1.300" /><circle cx="8" cy="8" r="4.200" stroke="#a5a5ff" strokeWidth="1.300" /><circle cx="8" cy="8" r="1.700" fill="#dcdcff" /></Icon>
                    <a href="#exit">Çıkış</a>
                  </LinkBar>
                </LinkFrame>
              </BannerNav>
            </BannerRight>
          </Banner>

          <Body>
            <Sidebar>
              <SideHead href="#easy"><span>»</span>KOLAY KURULUM</SideHead>
              {sideTop.map(s => <SideLink key={s} href="#menu">{s}</SideLink>)}
              <SubMenu>
                <SubLink href="#parameters">» Parametreler</SubLink>
                <SubLink href="#status">» Durum</SubLink>
              </SubMenu>
              {sideBottom.map(s => <SideLink key={s} href="#menu">{s}</SideLink>)}
            </Sidebar>

            <Main>
              <Index>
                <li><Anchor href="#durum">Durum</Anchor></li>
                <li><Anchor href="#hiz">ADSL Hızı Bilgisi</Anchor></li>
                <li><Anchor href="#hata">Hata Göstergesi</Anchor></li>
                <li><Anchor href="#veri">Veri İstatistikleri</Anchor></li>
              </Index>
              <Sections>
                <Section id="durum">Durum:<DataTable grid={lineState} /><BackToTop /></Section>
                <Section id="hiz" $tight>ADSL Hızı:<DataTable grid={speed} /><BackToTop plain /></Section>
                <Section id="hata">Sinyal ve Hata Bilgileri:<DataTable grid={signal} /><DataTable grid={errors} /><BackToTop /></Section>
                <Section id="veri">
                  Veri İstatistikleri:
                  <Table>
                    <colgroup><Col $width={530} /><Col /></colgroup>
                    <tbody>
                      <tr><Head scope="row">Alınan Hücreler</Head><Cell>39392609</Cell></tr>
                      <tr><Head scope="row">İletilen Hücreler</Head><Cell>32323961</Cell></tr>
                    </tbody>
                  </Table>
                  <BackToTop />
                </Section>
              </Sections>
              <Refresh>YENİLE</Refresh>
            </Main>

            <ScrollBar>
              <ScrollButton aria-label="Scroll up"><Chevron up /></ScrollButton>
              <Track>
                <TrackGap />
                <Thumb><Icon size={8} box={8}><path d="M0 .5h7m-7 2h7m-7 2h7m-7 2h7" stroke="#eef4ff" /></Icon></Thumb>
              </Track>
              <ScrollButton aria-label="Scroll down"><Chevron /></ScrollButton>
            </ScrollBar>
          </Body>
        </Page>
      </Frame>

      <StatusBar>
        <StatusText>Bitti</StatusText>
        {[0, 1, 2, 3, 4, 5].map(n => <Pane key={n} $width={24} />)}
        <Pane $width={161}>
          <Icon><circle cx="8" cy="8" r="7.300" fill="#2f74c8" stroke="#234d86" /><path d="M3 3c3-2 5-1 5 1S5 6 5 8s-3 1-3.500-1C1.500 5 2 4 3 3zM9 7c3-2 5 0 5 2s-3 5-4.500 4.500S7 8 9 7z" fill="#6cbb4b" /></Icon>
          Internet
        </Pane>
        <Pane $width={101} $inset>
          <Icon size={12} box={12}><path d="m7.500 7.500 4 4" stroke="#a8794a" strokeWidth="2.200" /><circle cx="5" cy="5" r="4" fill="#dcecfb" stroke="#4a86ca" strokeWidth="1.300" /><path d="M5 2.500v5M2.500 5h5" stroke="#1e5bb0" strokeWidth="1.600" /></Icon>
          <ZoomLevel>%100<Down /></ZoomLevel>
          <Icon size={14}><path d="M2 14h2m2 0h2m2 0h2m2 0h2M6 10h2m2 0h2m2 0h2M10 6h2m2 0h2M14 2h2" stroke="#b8b4a0" strokeWidth="2" /></Icon>
        </Pane>
      </StatusBar>

      <TaskBar>
        <Start>
          <Icon size={20}><path d="M2 3c2-1.200 3.500-1 5 0L6 7.500c-1.500-1-3-1-5 0z" fill="#f0632c" /><path d="M8 3.500c2 1 3.500 1 5.500 0l-1.200 4.500c-2 1-3.500 1-5.300 0z" fill="#8fd04a" /><path d="M.8 8.500c2-1.200 3.500-1 5 0l-1 4.500c-1.500-1-3-1-5 0z" fill="#5c92f5" /><path d="M6.800 9c2 1 3.500 1 5.500 0L11 13.500c-2 1-3.500 1-5.300 0z" fill="#fbd043" /></Icon>
          Başlat
        </Start>
        <QuickLaunch>
          <IE /><Firefox /><Outlook /><Disc /><Duck /><Nero /><Winamp /><Media /><Messenger /><Torrent /><RedX /><Swirl /><Calculator />
        </QuickLaunch>
        <Tasks>
          <Task><IE />Network, İnternet ve...</Task>
          <Task $active><IE />http://192.168.2.1/ -...</Task>
        </Tasks>
        <Help>
          <Icon><path d="M2 1.500h12v11H9L11 15l-4.500-2.500H2z" fill="#fffee8" stroke="#000" /><path d="M5.500 5.500C5.500 2.500 10.500 2.500 10.500 5.500 10.500 7 8 7 8 9M8 10v1.500" stroke="#000" strokeWidth="1.600" /></Icon>
        </Help>
        <Tray>
          <User /><Monitors /><Speaker /><Safe /><Winamp /><Sync /><User /><User />
          <Icon><rect x="1" y="1" width="14" height="14" fill="#f5f0ec" /><path d="M3 1v14M15 1 4 8" stroke="#d8121b" strokeWidth="4" /><path d="m6 8 8 6m0-6v6H8" stroke="#111" strokeWidth="2" /></Icon>
          <Icon><rect width="16" height="16" fill="#b9c6e4" /><path d="M0 13 5 5l2 2 2-1 7 8v1H0z" fill="#1b2450" /><path d="m3 9 2-3 2 3M8 8l3 3" stroke="#fff" /></Icon>
          <Icon><path d="m9 5 6-2-3 12-5-2z" fill="#c4c8cc" stroke="#555d66" /><circle cx="5" cy="4.500" r="4.200" fill="#d8222a" /><path d="m3.200 2.700 3.600 3.600m0-3.600L3.200 6.300" stroke="#fff" strokeWidth="1.400" /></Icon>
          <TrayText>ATI</TrayText>
          <Torrent />
          <time>23:27</time>
        </Tray>
      </TaskBar>
    </Window>
  );
}
